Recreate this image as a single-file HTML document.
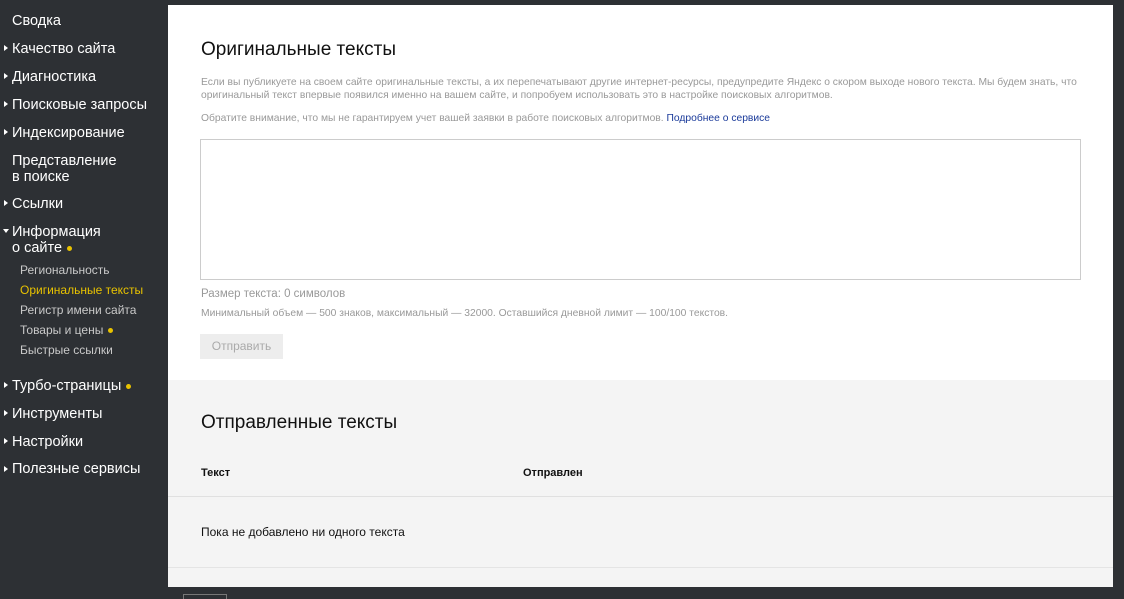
<!DOCTYPE html>
<html><head><meta charset="utf-8"><style>
html,body{margin:0;width:1124px;height:599px;overflow:hidden}
body{background:#2d3034;font-family:"Liberation Sans",Arial,sans-serif;position:relative}
.nav{position:absolute;left:0;top:0;width:168px;color:#fff}
.i{position:absolute;left:12px;font-size:14.5px;line-height:16px;color:#fff}
.a{position:absolute;left:4px;width:0;height:0;border-top:3px solid transparent;border-bottom:3px solid transparent;border-left:4px solid #fff}
.s{position:absolute;left:20px;font-size:12px;color:#c9c9c9}
.d{display:inline-block;width:5px;height:5px;border-radius:50%;background:#e8c200;margin-left:5px;vertical-align:middle}
.main{position:absolute;left:168px;top:5px;width:945px;height:582px;background:#fff}
.gray{position:absolute;left:0;top:375px;width:945px;height:207px;background:#f4f4f4}
h1{position:absolute;left:33px;margin:0;font-weight:normal;font-size:19px;color:#111}
.p{position:absolute;left:33px;font-size:10.3px;color:#999;line-height:13px;width:885px}
</style></head><body>
<div class="nav">
<div class="i" style="top:13px">Сводка</div>
<div class="a" style="top:45px"></div><div class="i" style="top:41px">Качество сайта</div>
<div class="a" style="top:73px"></div><div class="i" style="top:69px">Диагностика</div>
<div class="a" style="top:101px"></div><div class="i" style="top:97px">Поисковые запросы</div>
<div class="a" style="top:129px"></div><div class="i" style="top:125px">Индексирование</div>
<div class="i" style="top:153px">Представление<br>в поиске</div>
<div class="a" style="top:200px"></div><div class="i" style="top:196px">Ссылки</div>
<div style="position:absolute;left:3px;top:229px;width:0;height:0;border-left:3px solid transparent;border-right:3px solid transparent;border-top:4px solid #fff"></div>
<div class="i" style="top:224px">Информация<br>о сайте<span class="d"></span></div>
<div class="s" style="top:263px">Региональность</div>
<div class="s" style="top:283px;color:#e8c200">Оригинальные тексты</div>
<div class="s" style="top:303px">Регистр имени сайта</div>
<div class="s" style="top:323px">Товары и цены<span class="d"></span></div>
<div class="s" style="top:343px">Быстрые ссылки</div>
<div class="a" style="top:382px"></div><div class="i" style="top:378px">Турбо-страницы<span class="d"></span></div>
<div class="a" style="top:410px"></div><div class="i" style="top:406px">Инструменты</div>
<div class="a" style="top:438px"></div><div class="i" style="top:434px">Настройки</div>
<div class="a" style="top:466px"></div><div class="i" style="top:461px">Полезные сервисы</div>
</div>
<div class="main">
<h1 style="top:34px">Оригинальные тексты</h1>
<div class="p" style="top:71px">Если вы публикуете на своем сайте оригинальные тексты, а их перепечатывают другие интернет-ресурсы, предупредите Яндекс о скором выходе нового текста. Мы будем знать, что оригинальный текст впервые появился именно на вашем сайте, и попробуем использовать это в настройке поисковых алгоритмов.</div>
<div class="p" style="top:107px">Обратите внимание, что мы не гарантируем учет вашей заявки в работе поисковых алгоритмов. <span style="color:#1a3a9a">Подробнее о сервисе</span></div>
<div style="position:absolute;left:32px;top:134px;width:879px;height:139px;border:1px solid #ccc"></div>
<div class="p" style="top:283px;font-size:11.5px">Размер текста: 0 символов</div>
<div class="p" style="top:302px">Минимальный объем — 500 знаков, максимальный — 32000. Оставшийся дневной лимит — 100/100 текстов.</div>
<div style="position:absolute;left:32px;top:329px;width:83px;height:25px;background:#ededed;color:#aaa;font-size:12px;line-height:25px;text-align:center">Отправить</div>
<div class="gray">
<h1 style="top:32px">Отправленные тексты</h1>
<div style="position:absolute;left:33px;top:87px;font-size:11px;font-weight:bold;color:#111">Текст</div>
<div style="position:absolute;left:355px;top:87px;font-size:11px;font-weight:bold;color:#111">Отправлен</div>
<div style="position:absolute;left:0;top:116px;width:945px;height:1px;background:#e0e0e0"></div>
<div style="position:absolute;left:33px;top:145px;font-size:12px;color:#111">Пока не добавлено ни одного текста</div>
<div style="position:absolute;left:0;top:187px;width:945px;height:1px;background:#e4e4e4"></div>
</div>
</div>
<div style="position:absolute;left:183px;top:594px;width:42px;height:10px;border:1px solid #777"></div>
</body></html>
